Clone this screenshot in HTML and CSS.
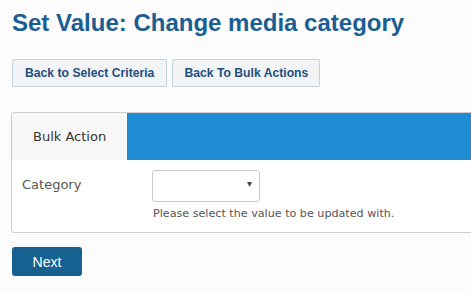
FILE: index.html
```html
<!DOCTYPE html>
<html lang="en">
<head>
    <meta charset="UTF-8">
    <title>Set Value</title>
    <link rel="stylesheet" href="styles.css">
</head>
<body>
    <div class="page">
        <h1>Set Value: Change media category</h1>
        <div class="nav-buttons">
            <button class="nav-btn">Back to Select Criteria</button>
            <button class="nav-btn">Back To Bulk Actions</button>
        </div>
        <div class="panel">
            <div class="tab-bar">
                <div class="tab active">Bulk Action</div>
                <div class="tab-fill"></div>
            </div>
            <div class="panel-body">
                <label class="field-label" for="category">Category</label>
                <div class="field">
                    <div class="select-box" id="category">
                        <span class="arrow">&#9662;</span>
                    </div>
                    <div class="hint">Please select the value to be updated with.</div>
                </div>
            </div>
        </div>
        <button class="next-btn">Next</button>
    </div>
</body>
</html>
```

FILE: styles.css
```css
body {
    margin: 0;
    background: #fcfcfc;
    font-family: "DejaVu Sans", Verdana, sans-serif;
    color: #444;
}

.page {
    padding: 0 0 0 12px;
}

h1 {
    margin: 0;
    padding-top: 9px;
    font-family: "Liberation Sans", Arial, sans-serif;
    font-size: 24px;
    font-weight: bold;
    color: #1b5e92;
    line-height: 28px;
}

.nav-buttons {
    display: flex;
    gap: 5px;
    margin-top: 22px;
}

.nav-btn {
    height: 28px;
    padding: 0 12px;
    background: #f3f4f6;
    border: 1px solid #c5d3de;
    border-radius: 2px;
    font-family: "Liberation Sans", Tahoma, sans-serif;
    font-size: 12.2px;
    font-weight: bold;
    color: #1f4f7d;
}

.nav-btn + .nav-btn {
    padding: 0 11px;
}

.panel {
    margin-top: 25px;
    margin-left: -1px;
    background: #fff;
    border: 1px solid #cfcfcf;
    border-right: none;
    border-radius: 4px 0 0 4px;
    height: 119px;
}

.tab-bar {
    display: flex;
    height: 47px;
}

.tab {
    width: 115px;
    background: #f8f8f8;
    font-size: 13px;
    line-height: 47px;
    padding-left: 21px;
    box-sizing: border-box;
    color: #333;
    border-top-left-radius: 4px;
}

.tab-fill {
    flex: 1;
    background: #1e8bd3;
}

.panel-body {
    display: flex;
    padding: 10px 0 0 10px;
}

.field-label {
    width: 130px;
    font-size: 13px;
    line-height: 25px;
    padding-top: 2px;
    color: #555;
}

.select-box {
    width: 108px;
    height: 32px;
    box-sizing: border-box;
    border: 1px solid #c8c8c8;
    border-radius: 3px;
    background: #fff;
    position: relative;
}

.arrow {
    position: absolute;
    right: 7px;
    top: 7px;
    font-size: 10px;
    color: #444;
}

.hint {
    margin-top: 5px;
    padding-left: 1px;
    font-size: 11.15px;
    color: #555;
}

.next-btn {
    margin-top: 14px;
    width: 70px;
    height: 29px;
    background: #16618f;
    border: none;
    border-radius: 3px;
    color: #fff;
    font-family: "Liberation Sans", Arial, sans-serif;
    font-size: 14px;
}
```
